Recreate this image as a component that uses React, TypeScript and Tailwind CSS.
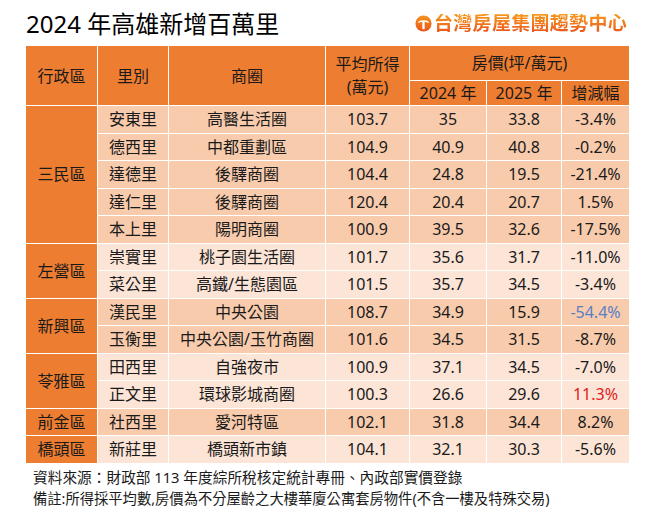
import React from 'react';

type Row = [string, string, string, string, string, string];

interface Group {
  district: string;
  dark: boolean;
  rows: Row[];
}

const groups: Group[] = [
  {
    district: '三民區',
    dark: true,
    rows: [
      ['安東里', '高醫生活圈', '103.7', '35', '33.8', '-3.4%'],
      ['德西里', '中都重劃區', '104.9', '40.9', '40.8', '-0.2%'],
      ['達德里', '後驛商圈', '104.4', '24.8', '19.5', '-21.4%'],
      ['達仁里', '後驛商圈', '120.4', '20.4', '20.7', '1.5%'],
      ['本上里', '陽明商圈', '100.9', '39.5', '32.6', '-17.5%'],
    ],
  },
  {
    district: '左營區',
    dark: false,
    rows: [
      ['崇實里', '桃子園生活圈', '101.7', '35.6', '31.7', '-11.0%'],
      ['菜公里', '高鐵/生態園區', '101.5', '35.7', '34.5', '-3.4%'],
    ],
  },
  {
    district: '新興區',
    dark: true,
    rows: [
      ['漢民里', '中央公園', '108.7', '34.9', '15.9', '-54.4%'],
      ['玉衡里', '中央公園/玉竹商圈', '101.6', '34.5', '31.5', '-8.7%'],
    ],
  },
  {
    district: '苓雅區',
    dark: false,
    rows: [
      ['田西里', '自強夜市', '100.9', '37.1', '34.5', '-7.0%'],
      ['正文里', '環球影城商圈', '100.3', '26.6', '29.6', '11.3%'],
    ],
  },
  {
    district: '前金區',
    dark: true,
    rows: [['社西里', '愛河特區', '102.1', '31.8', '34.4', '8.2%']],
  },
  {
    district: '橋頭區',
    dark: false,
    rows: [['新莊里', '橋頭新市鎮', '104.1', '32.1', '30.3', '-5.6%']],
  },
];

// special colours for two change values
const changeColor = (v: string) => {
  if (v === '-54.4%') return 'text-[#5a7fc6]';
  if (v === '11.3%') return 'text-[#e0201f]';
  return 'text-[#1a1a1a]';
};

function Logo() {
  return (
    <div className="flex items-center gap-[2px]">
      <svg width="17" height="17" viewBox="0 0 16 16">
        <defs>
          <linearGradient id="lg" x1="0" y1="0" x2="0" y2="1">
            <stop offset="0" stopColor="#f7941d" />
            <stop offset="1" stopColor="#e9541c" />
          </linearGradient>
        </defs>
        <circle cx="8" cy="8" r="7.6" fill="url(#lg)" />
        <path d="M3.2 6.2 Q8 3.6 12.8 6.2 L12.8 7.6 Q8 5.3 3.2 7.6 Z" fill="#fff" />
        <rect x="6.9" y="6" width="2.2" height="7.4" fill="#fff" />
      </svg>
      <span className="bg-linear-to-b from-[#f79a1e] to-[#e9521c] bg-clip-text text-[19px] font-bold leading-none tracking-[0.3px] text-transparent">
        台灣房屋集團趨勢中心
      </span>
    </div>
  );
}

export default function App() {
  const cell = 'border border-white p-0 text-center align-middle';
  return (
    <div className="h-[516px] w-[652px] bg-white px-[25px] pt-[7px] font-['Noto_Sans','Noto_Sans_CJK_TC',sans-serif] text-[#1a1a1a]">
      <div className="flex h-[33px] items-center justify-between">
        <h1 className="pl-[1px] text-[24px] leading-none font-normal text-black">2024 年高雄新增百萬里</h1>
        <Logo />
      </div>

      <table className="mt-[5px] w-[604px] table-fixed border-collapse text-[16px] leading-none">
        <colgroup>
          <col className="w-[72px]" />
          <col className="w-[71px]" />
          <col className="w-[157px]" />
          <col className="w-[84px]" />
          <col className="w-[77px]" />
          <col className="w-[75px]" />
          <col className="w-[68px]" />
        </colgroup>
        <thead className="bg-[#ed7d31]">
          <tr className="h-[35px]">
            <th rowSpan={2} className={`${cell} font-normal`}>行政區</th>
            <th rowSpan={2} className={`${cell} font-normal`}>里別</th>
            <th rowSpan={2} className={`${cell} font-normal`}>商圈</th>
            <th rowSpan={2} className={`${cell} font-normal leading-[23px]`}>
              平均所得
              <br />
              (萬元)
            </th>
            <th colSpan={3} className={`${cell} font-normal`}>房價(坪/萬元)</th>
          </tr>
          <tr className="h-[25px]">
            <th className={`${cell} font-normal`}>2024 年</th>
            <th className={`${cell} font-normal`}>2025 年</th>
            <th className={`${cell} font-normal`}>增減幅</th>
          </tr>
        </thead>
        <tbody>
          {groups.map((g) =>
            g.rows.map((r, i) => (
              <tr key={r[0]} className={`h-[27.5px] ${g.dark ? 'bg-[#f8cbad]' : 'bg-[#fce4d6]'}`}>
                {i === 0 && (
                  <td rowSpan={g.rows.length} className={`${cell} bg-[#ed7d31]`}>
                    {g.district}
                  </td>
                )}
                <td className={cell}>{r[0]}</td>
                <td className={cell}>{r[1]}</td>
                <td className={cell}>{r[2]}</td>
                <td className={cell}>{r[3]}</td>
                <td className={cell}>{r[4]}</td>
                <td className={`${cell} ${changeColor(r[5])}`}>{r[5]}</td>
              </tr>
            ))
          )}
        </tbody>
      </table>

      <div className="pl-[8px] pt-[2px] leading-[22px] text-[#1a1a1a]">
        <p className="text-[14.7px]">資料來源：財政部 113 年度綜所稅核定統計專冊、內政部實價登錄</p>
        <p className="text-[14.3px]">備註:所得採平均數,房價為不分屋齡之大樓華廈公寓套房物件(不含一樓及特殊交易)</p>
      </div>
    </div>
  );
}
